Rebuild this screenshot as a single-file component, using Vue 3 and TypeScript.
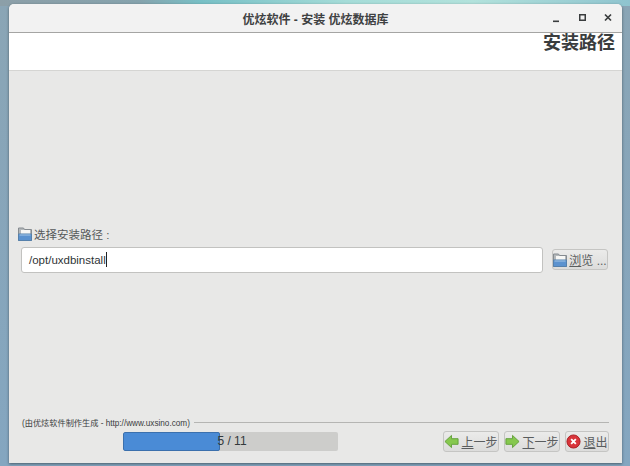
<template>
  <div class="desktop">
    <div class="window">
      <header class="titlebar">
        <div class="titlebar__title">优炫软件 - 安装 优炫数据库</div>
        <div class="titlebar__controls">
          <svg width="14" height="14" viewBox="0 0 14 14"><rect x="3" y="8.500" width="6" height="1.600" fill="#3a3d3e" /></svg>
          <svg width="14" height="14" viewBox="0 0 14 14"><rect x="3.750" y="2.750" width="5.500" height="5.500" fill="none" stroke="#3a3d3e" stroke-width="1.500" /></svg>
          <svg width="14" height="14" viewBox="0 0 14 14"><path d="M3 2.500l6 6M9 2.500l-6 6" stroke="#3a3d3e" stroke-width="1.700" fill="none" /></svg>
        </div>
      </header>

      <div class="banner">安装路径</div>

      <main class="content">
        <div class="path">
          <label class="path__label">
            <svg width="14" height="14" viewBox="0 0 14 14">
              <path d="M.5 1h5l1 1.500h7v11H.5z" fill="#b4b8bb" stroke="#858b90" />
              <rect x="3" y="3" width="9" height="4" fill="#f7f7f5" />
              <path d="M.5 7h13v6.500H.5z" fill="#5b92cf" stroke="#5580ab" />
              <path d="M1.500 8h11" stroke="#a5c6e8" />
            </svg>
            <span>选择安装路径 :</span>
          </label>
          <div class="path__row">
            <div class="path__input">/opt/uxdbinstall<span class="caret"></span></div>
            <button class="btn btn--browse" type="button">
              <svg width="14" height="14" viewBox="0 0 14 14">
                <path d="M.5 1h5l1 1.500h7v11H.5z" fill="#b4b8bb" stroke="#858b90" />
                <rect x="3" y="3" width="9" height="4" fill="#f7f7f5" />
                <path d="M.5 7h13v6.500H.5z" fill="#5b92cf" stroke="#5580ab" />
                <path d="M1.500 8h11" stroke="#a5c6e8" />
              </svg>
              <span class="btn__text"><u>浏</u>览 ...</span>
            </button>
          </div>
        </div>
      </main>

      <footer class="footer">
        <div class="footer__credit">
          <span>(由优炫软件制作生成 - http://www.uxsino.com)</span>
          <i class="footer__rule"></i>
        </div>
        <div class="footer__row">
          <div class="progress">
            <div class="progress__fill" :style="{ width: progress + '%' }"></div>
            <span class="progress__text">{{ step }} / {{ total }}</span>
          </div>
          <div class="footer__buttons">
            <button class="btn btn--nav" type="button">
              <svg width="15" height="15" viewBox="0 0 16 16"><path d="M1 8l7-6.500V5h7v6H8v3.500z" fill="#86c84e" stroke="#62a03a" /></svg>
              <span class="btn__text"><u>上</u>一步</span>
            </button>
            <button class="btn btn--nav" type="button">
              <svg width="15" height="15" viewBox="0 0 16 16"><path d="M15 8L8 1.500V5H1v6h7v3.500z" fill="#86c84e" stroke="#62a03a" /></svg>
              <span class="btn__text"><u>下</u>一步</span>
            </button>
            <button class="btn btn--quit" type="button">
              <svg width="15" height="15" viewBox="0 0 16 16">
                <circle cx="8" cy="8" r="7" fill="#d9343a" stroke="#a91d22" />
                <path d="M5.500 5.500l5 5M10.500 5.500l-5 5" stroke="#fff" stroke-width="2" />
              </svg>
              <span class="btn__text"><u>退</u>出</span>
            </button>
          </div>
        </div>
      </footer>
    </div>
  </div>
</template>

<script setup lang="ts">
const step = 5
const total = 11
const progress = 45.3
</script>

<style>
html,
body {
  margin: 0;
  overflow: hidden;
}
</style>

<style scoped>
.desktop {
  width: 630px;
  height: 466px;
  box-sizing: border-box;
  padding: 4px 8px 3px 9px;
  background:
    linear-gradient(90deg, #8c9fa8 0%, #86a3ad 22%, #78c0c6 32%, #a5dcd8 55%, #b2e2dc 75%, #8fc4cf 100%) top / 100% 6px no-repeat,
    linear-gradient(#8aa5b5, #84a6c0);
  font-family: "Liberation Sans", "Noto Sans CJK SC", sans-serif;
  color: #3a3d3e;
}

.window {
  height: 100%;
  display: flex;
  flex-direction: column;
  background: #e8e8e7;
  border-radius: 5px 5px 0 0;
  box-shadow: 0 1px 3px rgba(0, 0, 0, 0.45);
}

.titlebar {
  flex: none;
  height: 29px;
  box-sizing: border-box;
  position: relative;
  display: flex;
  align-items: center;
  justify-content: center;
  background: #f2f2f2;
  border-radius: 5px 5px 0 0;
  border-bottom: 1px solid #a5a5a3;
}

.titlebar__title {
  font-size: 12px;
  font-weight: 700;
  color: #3e4142;
}

.titlebar__controls {
  position: absolute;
  right: 6px;
  top: 8px;
  display: flex;
  gap: 12px;
}

.banner {
  flex: none;
  height: 38px;
  box-sizing: border-box;
  padding: 0 7px 0 0;
  background: #fff;
  border-bottom: 1px solid #d5d5d3;
  text-align: right;
  font-size: 18px;
  font-weight: 700;
  line-height: 21px;
  color: #3a3d3e;
}

.content {
  flex: 1;
  display: flex;
  align-items: center;
  padding: 0 14px 0 9px;
}

.path {
  width: 100%;
  margin-top: 11px;
}

.path__label {
  display: flex;
  align-items: center;
  gap: 2px;
  font-size: 11.500px;
  height: 14px;
  color: #555859;
}

.path__row {
  display: flex;
  align-items: center;
  gap: 9px;
  margin-top: 6px;
  padding-left: 3px;
}

.path__input {
  flex: 1;
  height: 26px;
  box-sizing: border-box;
  padding-left: 7px;
  line-height: 24px;
  font-size: 11.500px;
  background: #fff;
  border: 1px solid #c2c2c0;
  border-radius: 3px;
  color: #2e3436;
}

.caret {
  display: inline-block;
  width: 1px;
  height: 15px;
  vertical-align: -3px;
  background: #222;
}

.btn {
  display: flex;
  align-items: center;
  justify-content: center;
  gap: 2px;
  height: 21px;
  box-sizing: border-box;
  padding: 0;
  font: inherit;
  font-size: 12px;
  color: #5a5d5e;
  background: linear-gradient(#ebebea, #dcdcdb);
  border: 1px solid #c5c5c3;
  border-radius: 3px;
}

.btn__text {
  white-space: nowrap;
}

.btn--browse,
.btn--nav {
  width: 56px;
}

.btn--quit {
  width: 44px;
}

.footer {
  flex: none;
  padding: 0 13px 11px 13px;
}

.footer__credit {
  display: flex;
  align-items: center;
  gap: 4px;
  height: 10px;
  font-size: 8.200px;
  color: #3a3d3e;
}

.footer__rule {
  flex: 1;
  height: 1px;
  background: #b5b5b3;
}

.footer__row {
  display: flex;
  align-items: center;
  justify-content: space-between;
  margin-top: 4px;
  padding-left: 101px;
}

.progress {
  position: relative;
  width: 215px;
  height: 19px;
  background: #cdcdcb;
  border-radius: 2px;
  overflow: hidden;
}

.progress__fill {
  height: 100%;
  box-sizing: border-box;
  background: #4a8bd6;
  border: 1px solid #3b70ad;
  border-radius: 2px;
}

.progress__text {
  position: absolute;
  inset: 0 0 0 3px;
  text-align: center;
  font-size: 12px;
  line-height: 19px;
  color: #33393b;
}

.footer__buttons {
  display: flex;
  gap: 5px;
}
</style>
